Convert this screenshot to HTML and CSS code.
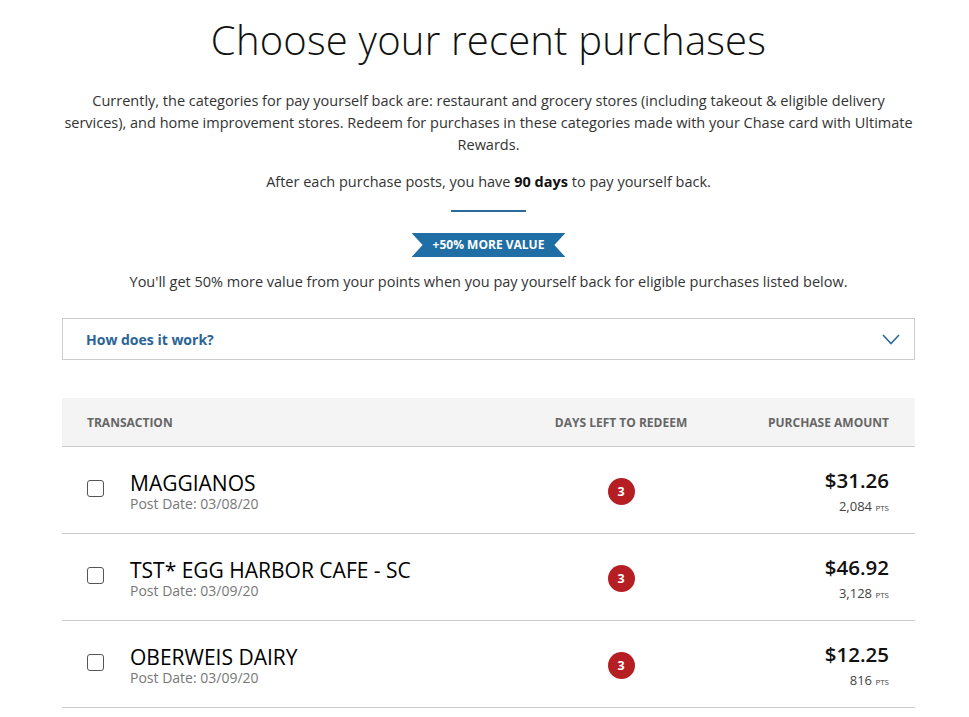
FILE: index.html
```html
<!doctype html>
<html>
<head>
<meta charset="utf-8">
<title>Pay Yourself Back</title>
<link rel="stylesheet" href="styles.css">
</head>
<body>
<div class="page">
	<h1 class="title">Choose your recent purchases</h1>
	<p class="intro first">Currently, the categories for pay yourself back are: restaurant and grocery stores (including takeout &amp; eligible delivery services), and home improvement stores. Redeem for purchases in these categories made with your Chase card with Ultimate Rewards.</p>
	<p class="intro days">After each purchase posts, you have <b>90 days</b> to pay yourself back.</p>
	<div class="rule"></div>
	<div class="ribbon-wrap"><span class="ribbon">+50% MORE VALUE</span></div>
	<p class="intro more">You'll get 50% more value from your points when you pay yourself back for eligible purchases listed below.</p>

	<div class="accordion">
		<span>How does it work?</span>
		<svg width="18" height="11" viewBox="0 0 18 11"><path d="M1 1 L9 9.5 L17 1" fill="none" stroke="#2a6a9c" stroke-width="1.6"/></svg>
	</div>

	<div class="table">
		<div class="thead">
			<div>TRANSACTION</div>
			<div class="c">DAYS LEFT TO REDEEM</div>
			<div class="r">PURCHASE AMOUNT</div>
		</div>
		<div class="row">
			<div class="tx">
				<span class="check"></span>
				<div class="info">
					<div class="name">MAGGIANOS</div>
					<div class="date">Post Date: 03/08/20</div>
				</div>
			</div>
			<div class="c"><span class="badge">3</span></div>
			<div class="r">
				<div class="amt">$31.26</div>
				<div class="pts">2,084 <small>PTS</small></div>
			</div>
		</div>
		<div class="row">
			<div class="tx">
				<span class="check"></span>
				<div class="info">
					<div class="name">TST* EGG HARBOR CAFE - SC</div>
					<div class="date">Post Date: 03/09/20</div>
				</div>
			</div>
			<div class="c"><span class="badge">3</span></div>
			<div class="r">
				<div class="amt">$46.92</div>
				<div class="pts">3,128 <small>PTS</small></div>
			</div>
		</div>
		<div class="row">
			<div class="tx">
				<span class="check"></span>
				<div class="info">
					<div class="name">OBERWEIS DAIRY</div>
					<div class="date">Post Date: 03/09/20</div>
				</div>
			</div>
			<div class="c"><span class="badge">3</span></div>
			<div class="r">
				<div class="amt">$12.25</div>
				<div class="pts">816 <small>PTS</small></div>
			</div>
		</div>
	</div>
</div>
</body>
</html>
```

FILE: styles.css
```css
*{ margin:0; padding:0; box-sizing:border-box;}
body{ font-family:"Open Sans", "Noto Sans", sans-serif; color:#333; background:#fff;}
.page{ width:853px; margin-left:62px; padding-top:14px;}

.title{ font-weight:300; font-size:40px; line-height:52px; color:#111; text-align:center; letter-spacing:0.2px;}
.intro{ font-size:14.5px; line-height:22px; text-align:center; color:#333;}
.first{ margin-top:24px;}
.days{ margin-top:15px;}
.days b{ font-weight:700; color:#111;}
.rule{ width:75px; height:2px; background:#2a6a9c; margin:17px auto 0;}
.ribbon-wrap{ text-align:center; margin-top:21px; height:24px; line-height:0;}
.ribbon{ display:inline-block; vertical-align:top; background:#1f6ea5; color:#fff; font-size:12px; font-weight:700; line-height:24px; height:24px; padding:0 21px; white-space:nowrap;
	clip-path:polygon(0 0, 100% 0, calc(100% - 11px) 50%, 100% 100%, 0 100%, 11px 50%);}
.more{ margin-top:14px;}

.accordion{ margin-top:25px; height:42px; border:1px solid #ccc; display:flex; align-items:center; justify-content:space-between; padding:0 14px 0 23px;}
.accordion span{ color:#2a6496; font-weight:700; font-size:14px;}

.table{ margin-top:38px;}
.thead,.row{ display:grid; grid-template-columns:1fr 176px 180px; padding:0 26px 0 25px; align-items:center;}
.thead{ background:#f4f4f4; height:49px; border-bottom:1px solid #ccc; font-size:12px; font-weight:700; color:#666;}
.c{ text-align:center;}
.r{ text-align:right;}
.row{ height:87px; border-bottom:1px solid #ccc;}
.tx{ display:flex; align-items:center;}
.check{ width:17px; height:17px; border:1px solid #555; border-radius:3px; margin-right:26px; margin-top:-4px; flex:none;}
.info{ margin-top:4px;}
.name{ font-size:21px; line-height:23px; color:#000;}
.date{ font-size:14px; line-height:17px; color:#777;}
.badge{ display:inline-block; width:27px; height:27px; line-height:27px; border-radius:50%; background:#b51f24; color:#fff; font-size:12.5px; font-weight:700; text-align:center; margin-top:2px;}
.amt{ font-size:20.5px; line-height:26px; color:#111; font-weight:600; margin-top:4px;}
.pts{ font-size:13px; line-height:18px; color:#444; margin-top:4px;}
.pts small{ font-size:8px;}
```
